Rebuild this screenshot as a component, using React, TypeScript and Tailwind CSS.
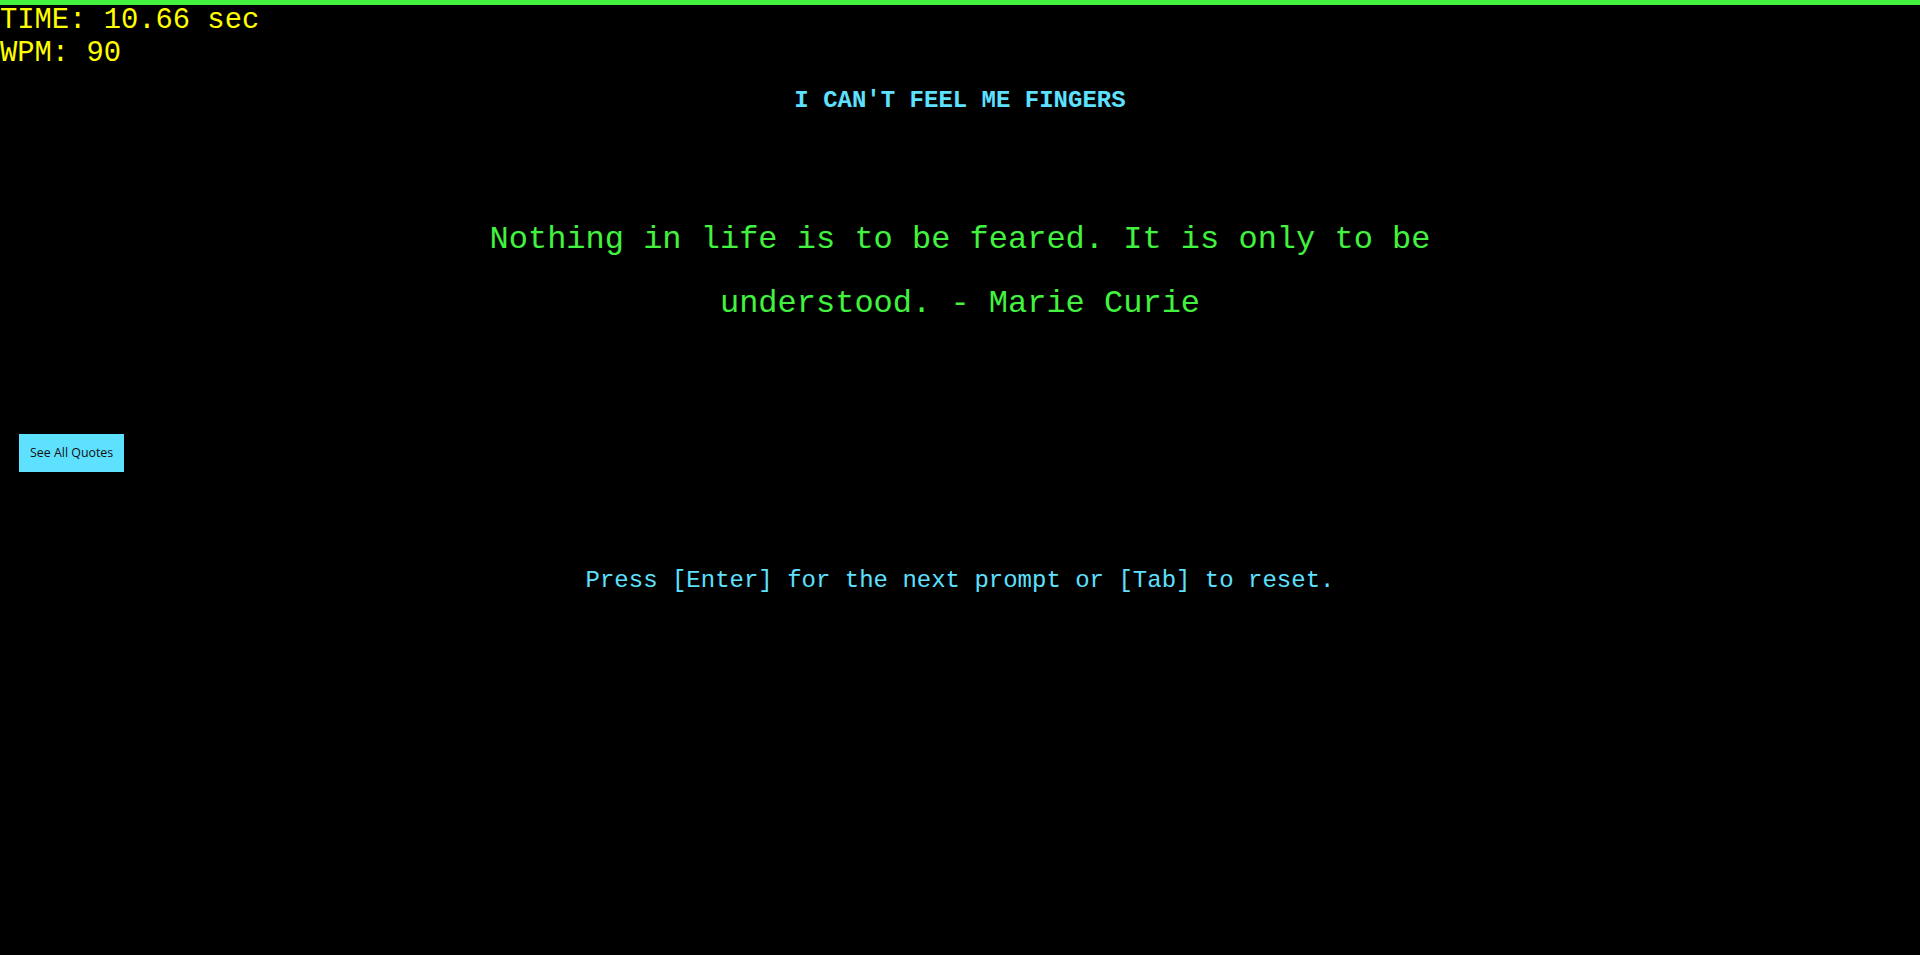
import React from "react";

export default function App() {
  const mono = { fontFamily: '"Liberation Mono", "Courier New", monospace' };
  return (
    <div className="min-h-[955px] w-full bg-black" style={mono}>
      <div className="h-[5px] w-full bg-[#42f23f]" />
      <div className="mt-0 text-[28.8px] leading-[1.133] text-[#ffff00]">
        <div>TIME: 10.66 sec</div>
        <div>WPM: 90</div>
      </div>
      <h1 className="mt-[17px] text-center text-[24px] font-bold leading-[1.133] text-[#5ee1ff]">
        I CAN'T FEEL ME FINGERS
      </h1>
      <p className="mx-auto mt-[94px] max-w-[960px] text-center text-[32px] leading-[64px] text-[#42f23f]">
        Nothing in life is to be feared. It is only to be understood. - Marie Curie
      </p>
      <div className="mt-[98px] pl-[19px]">
        <button
          className="h-[38px] bg-[#5ee1ff] px-[11px] text-[12.4px] text-[#111]"
          style={{ fontFamily: '"Open Sans", "Noto Sans", sans-serif' }}
        >
          See All Quotes
        </button>
      </div>
      <p className="mt-[95px] text-center text-[24px] leading-[1.133] text-[#5ee1ff]">
        Press [Enter] for the next prompt or [Tab] to reset.
      </p>
    </div>
  );
}
